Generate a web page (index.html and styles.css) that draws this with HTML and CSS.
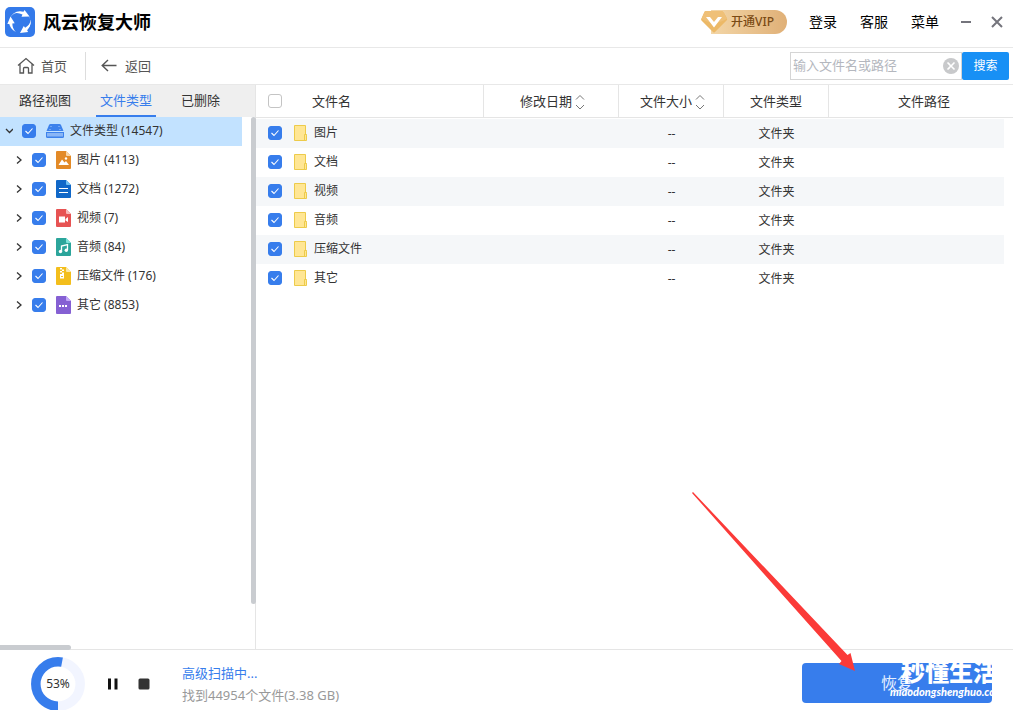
FILE: index.html
```html
<!DOCTYPE html>
<html lang="zh-CN">
<head>
<meta charset="utf-8">
<title>风云恢复大师</title>
<link rel="stylesheet" href="styles.css">
</head>
<body>
<div class="app">
  <header class="titlebar">
    <svg class="logo" viewBox="0 0 30 30" width="30" height="30" aria-hidden="true">
      <rect width="30" height="30" rx="5" fill="#347aea"/>
      <g fill="#fff">
        <path d="M8.500 6.500Q13 3.200 18.500 4.800L19.500 3L24.500 9.500L16.500 9.800L17.500 7.600Q13 5 8.500 6.500Z"/>
        <path d="M8.500 6.500Q13 3.200 18.500 4.800L19.500 3L24.500 9.500L16.500 9.800L17.500 7.600Q13 5 8.500 6.500Z" transform="rotate(120 15 15)"/>
        <path d="M8.500 6.500Q13 3.200 18.500 4.800L19.500 3L24.500 9.500L16.500 9.800L17.500 7.600Q13 5 8.500 6.500Z" transform="rotate(240 15 15)"/>
        <path d="M5.300 19.500A10.700 10.700 0 0 1 8.500 6.500L11 6A9.600 9.600 0 0 0 5.300 19.500Z"/>
        <path d="M23.500 8.500A10.700 10.700 0 0 1 24.500 19.500L22.800 21A10 10 0 0 0 23.500 8.500Z"/>
      </g>
    </svg>
    <h1 class="title">风云恢复大师</h1>
    <button class="vip" type="button">
      <svg class="gem" viewBox="0 0 27 24" width="27" height="24" aria-hidden="true">
        <path d="M5 1H20Q22 1 23 3L26 8.500Q26.500 9.500 25.500 10.500L14 22Q13 23 12 22L.5 10.500Q-.3 9.500 .5 8.500L3 3Q3.500 1 5 1Z" fill="#ecb967"/>
        <path d="M5 1H20Q22 1 23 3L26 8.500Q26.500 9.500 13 14Q-.3 9.500 .5 8.500L3 3Q3.500 1 5 1Z" fill="#efc078"/>
        <path d="M5 7H9L13 12L17 7H21L13 17.500Z" fill="#fff"/>
      </svg>
      <span>开通VIP</span>
    </button>
    <nav class="menu">
      <a href="#">登录</a>
      <a href="#">客服</a>
      <a href="#">菜单</a>
    </nav>
    <button class="win" type="button" aria-label="最小化">
      <svg viewBox="0 0 12 12" width="12" height="12"><path d="M1 6H11" stroke="#74747c" stroke-width="2"/></svg>
    </button>
    <button class="win" type="button" aria-label="关闭">
      <svg viewBox="0 0 12 12" width="12" height="12"><path d="M1 1L11 11M11 1L1 11" stroke="#74747c" stroke-width="2"/></svg>
    </button>
  </header>

  <div class="toolbar">
    <button class="tool home" type="button">
      <svg viewBox="0 0 18 18" width="18" height="18" fill="none" stroke="#555" stroke-width="1.300"><path d="M1 8.500L9 1.500L17 8.500M3 7V16H6.500V11.500Q6.500 10.500 7.500 10.500H10.500Q11.500 10.500 11.500 11.500V16H15V7"/></svg>
      <span>首页</span>
    </button>
    <button class="tool back" type="button">
      <svg viewBox="0 0 16 14" width="16" height="14" fill="none" stroke="#555" stroke-width="1.400"><path d="M1 6.500H15.500M7 1L1.200 6.500L7 12"/></svg>
      <span>返回</span>
    </button>
    <form class="search">
      <input class="query" type="text" placeholder="输入文件名或路径" aria-label="输入文件名或路径">
      <button class="clear" type="button" aria-label="清除">
        <svg viewBox="0 0 16 16" width="16" height="16"><circle cx="8" cy="8" r="8" fill="#c8c9cb"/><path d="M4.500 4.500L11.500 11.500M11.500 4.500L4.500 11.500" stroke="#fff" stroke-width="1.600"/></svg>
      </button>
      <button class="go" type="button">搜索</button>
    </form>
  </div>

  <main class="main">
    <aside class="side">
      <div class="tabs" role="tablist">
        <button class="tab" type="button" role="tab">路径视图</button>
        <button class="tab active" type="button" role="tab" aria-selected="true">文件类型</button>
        <button class="tab" type="button" role="tab">已删除</button>
      </div>
      <div class="treewrap">
        <ul class="tree">
          <li class="node root">
            <svg class="caret" viewBox="0 0 8 8" width="8" height="8"><path d="M1 2L4.500 5.500L8 2"/></svg>
            <label><input class="check" type="checkbox" checked>
              <svg class="drive" viewBox="0 0 18 14" width="18" height="14"><path d="M4.500 0H13.500Q14.500 0 15 1L17.500 7H.5L3 1Q3.500 0 4.500 0Z" fill="#3d82ec"/><path d="M0 8H18V12.500Q18 14 16.500 14H1.500Q0 14 0 12.500Z" fill="#3d82ec"/><path d="M2 9V12.500M4 9V12.500M6 9V12.500M8 9V12.500M10 9V12.500M12 9V12.500M14 9V12.500M16 9V12.500" stroke="#d6e9ff"/><path d="M4.500 2.500H5.500M12.500 2.500H13.500M3.500 5.500H4.500M13.500 5.500H14.500" stroke="#a9cbfa"/></svg>
              文件类型 (14547)</label>
          </li>
          <li class="node">
            <svg class="caret" viewBox="0 0 8 8" width="8" height="8"><path d="M2 0.500L6 4L2 7.500"/></svg>
            <label><input class="check" type="checkbox" checked>
              <svg class="file" viewBox="0 0 15 18" width="15" height="18"><path d="M1 0H10L15 5V17Q15 18 14 18H1Q0 18 0 17V1Q0 0 1 0Z" fill="#e38a27"/><path d="M10 0L15 5H11Q10 5 10 4Z" fill="#f8d6a8"/><path d="M2.500 14L6 8.500L8.500 11.500L10 10L13 14Z" fill="#fff"/><circle cx="10" cy="7.500" r="1.200" fill="#fff"/></svg>
              图片 (4113)</label>
          </li>
          <li class="node">
            <svg class="caret" viewBox="0 0 8 8" width="8" height="8"><path d="M2 0.500L6 4L2 7.500"/></svg>
            <label><input class="check" type="checkbox" checked>
              <svg class="file" viewBox="0 0 15 18" width="15" height="18"><path d="M1 0H10L15 5V17Q15 18 14 18H1Q0 18 0 17V1Q0 0 1 0Z" fill="#1168c8"/><path d="M10 0L15 5H11Q10 5 10 4Z" fill="#6fc0f2"/><path d="M3 8.500H12M3 12.500H12" stroke="#fff" stroke-width="1.200"/></svg>
              文档 (1272)</label>
          </li>
          <li class="node">
            <svg class="caret" viewBox="0 0 8 8" width="8" height="8"><path d="M2 0.500L6 4L2 7.500"/></svg>
            <label><input class="check" type="checkbox" checked>
              <svg class="file" viewBox="0 0 15 18" width="15" height="18"><path d="M1 0H10L15 5V17Q15 18 14 18H1Q0 18 0 17V1Q0 0 1 0Z" fill="#e75353"/><path d="M10 0L15 5H11Q10 5 10 4Z" fill="#f8b9b9"/><path d="M3 7.500H9V13.500H3ZM9.500 10L12 8V13L9.500 11.500Z" fill="#fff"/></svg>
              视频 (7)</label>
          </li>
          <li class="node">
            <svg class="caret" viewBox="0 0 8 8" width="8" height="8"><path d="M2 0.500L6 4L2 7.500"/></svg>
            <label><input class="check" type="checkbox" checked>
              <svg class="file" viewBox="0 0 15 18" width="15" height="18"><path d="M1 0H10L15 5V17Q15 18 14 18H1Q0 18 0 17V1Q0 0 1 0Z" fill="#2ca59b"/><path d="M10 0L15 5H11Q10 5 10 4Z" fill="#7be3da"/><path d="M5.500 13.500V8L11.500 6.500V12" fill="none" stroke="#fff" stroke-width="1.300"/><circle cx="4.500" cy="13.500" r="1.700" fill="#fff"/><circle cx="10.300" cy="12.200" r="1.700" fill="#fff"/></svg>
              音频 (84)</label>
          </li>
          <li class="node">
            <svg class="caret" viewBox="0 0 8 8" width="8" height="8"><path d="M2 0.500L6 4L2 7.500"/></svg>
            <label><input class="check" type="checkbox" checked>
              <svg class="file" viewBox="0 0 15 18" width="15" height="18"><path d="M1 0H10L15 5V17Q15 18 14 18H1Q0 18 0 17V1Q0 0 1 0Z" fill="#f3be1c"/><path d="M10 0L15 5H11Q10 5 10 4Z" fill="#fbe7a4"/><path d="M4 1H6V2.500H4ZM6 2.500H8V4H6ZM4 4H6V5.500H4ZM6 5.500H8V7H6ZM4 7H8V11.500H4Z" fill="#fff"/><path d="M5 9.500H7" stroke="#f3be1c"/></svg>
              压缩文件 (176)</label>
          </li>
          <li class="node">
            <svg class="caret" viewBox="0 0 8 8" width="8" height="8"><path d="M2 0.500L6 4L2 7.500"/></svg>
            <label><input class="check" type="checkbox" checked>
              <svg class="file" viewBox="0 0 15 18" width="15" height="18"><path d="M1 0H10L15 5V17Q15 18 14 18H1Q0 18 0 17V1Q0 0 1 0Z" fill="#8560d3"/><path d="M10 0L15 5H11Q10 5 10 4Z" fill="#c3a8fa"/><path d="M3 9H5V11H3ZM6 9H8V11H6ZM9 9H11V11H9Z" fill="#fff"/></svg>
              其它 (8853)</label>
          </li>
        </ul>
        <div class="vbar"></div>
        <div class="hbar"></div>
      </div>
    </aside>

    <section class="list">
      <table class="files">
        <colgroup><col class="c-name"><col class="c-date"><col class="c-size"><col class="c-type"><col><col class="c-gutter"></colgroup>
        <thead>
          <tr>
            <th class="name"><label class="cell"><input class="check" type="checkbox">文件名</label></th>
            <th class="sortable">修改日期<svg class="sort" viewBox="0 0 10 16" width="10" height="16"><path d="M1 4.500L5 .5L9 4.500M1 10L5 14L9 10"/></svg></th>
            <th class="sortable">文件大小<svg class="sort" viewBox="0 0 10 16" width="10" height="16"><path d="M1 4.500L5 .5L9 4.500M1 10L5 14L9 10"/></svg></th>
            <th>文件类型</th>
            <th class="path" colspan="2">文件路径</th>
          </tr>
        </thead>
        <tbody>
          <tr><td class="name"><label class="cell"><input class="check" type="checkbox" checked><svg class="folder" viewBox="0 0 13 16" width="13" height="16"><path d="M.5.5H11.500V9.500H12.500V15.500H.5Z"/><path d="M10.500 15.500V9.500H12.500"/></svg>图片</label></td><td></td><td>--</td><td>文件夹</td><td></td><td class="gutter"></td></tr>
          <tr><td class="name"><label class="cell"><input class="check" type="checkbox" checked><svg class="folder" viewBox="0 0 13 16" width="13" height="16"><path d="M.5.5H11.500V9.500H12.500V15.500H.5Z"/><path d="M10.500 15.500V9.500H12.500"/></svg>文档</label></td><td></td><td>--</td><td>文件夹</td><td></td><td class="gutter"></td></tr>
          <tr><td class="name"><label class="cell"><input class="check" type="checkbox" checked><svg class="folder" viewBox="0 0 13 16" width="13" height="16"><path d="M.5.5H11.500V9.500H12.500V15.500H.5Z"/><path d="M10.500 15.500V9.500H12.500"/></svg>视频</label></td><td></td><td>--</td><td>文件夹</td><td></td><td class="gutter"></td></tr>
          <tr><td class="name"><label class="cell"><input class="check" type="checkbox" checked><svg class="folder" viewBox="0 0 13 16" width="13" height="16"><path d="M.5.5H11.500V9.500H12.500V15.500H.5Z"/><path d="M10.500 15.500V9.500H12.500"/></svg>音频</label></td><td></td><td>--</td><td>文件夹</td><td></td><td class="gutter"></td></tr>
          <tr><td class="name"><label class="cell"><input class="check" type="checkbox" checked><svg class="folder" viewBox="0 0 13 16" width="13" height="16"><path d="M.5.5H11.500V9.500H12.500V15.500H.5Z"/><path d="M10.500 15.500V9.500H12.500"/></svg>压缩文件</label></td><td></td><td>--</td><td>文件夹</td><td></td><td class="gutter"></td></tr>
          <tr><td class="name"><label class="cell"><input class="check" type="checkbox" checked><svg class="folder" viewBox="0 0 13 16" width="13" height="16"><path d="M.5.5H11.500V9.500H12.500V15.500H.5Z"/><path d="M10.500 15.500V9.500H12.500"/></svg>其它</label></td><td></td><td>--</td><td>文件夹</td><td></td><td class="gutter"></td></tr>
        </tbody>
      </table>
    </section>
  </main>

  <footer class="status">
    <div class="ring">
      <svg viewBox="0 0 54 54" width="54" height="54" fill="none" stroke-width="9.500">
        <circle cx="27" cy="27" r="22.200" stroke="#f2f5ff"/>
        <circle cx="27" cy="27" r="22.200" stroke="#377dec" pathLength="100" stroke-dasharray="53 47" transform="rotate(90 27 27)"/>
      </svg>
      <span class="percent">53%</span>
    </div>
    <button class="ctl pause" type="button" aria-label="暂停"><svg viewBox="0 0 12 12" width="12" height="12"><path d="M1 .5H4V11.500H1ZM7.500 .5H10.500V11.500H7.500Z" fill="#111"/></svg></button>
    <button class="ctl stop" type="button" aria-label="停止"><svg viewBox="0 0 12 12" width="12" height="12"><rect x=".5" y=".5" width="11" height="11" rx="1.500" fill="#333"/></svg></button>
    <div class="info">
      <p class="scan">高级扫描中...</p>
      <p class="found">找到44954个文件(3.38 GB)</p>
    </div>
    <div class="action">
      <button class="recover" type="button">恢复</button>
      <div class="mark"><span class="mark-name">秒懂生活</span><span class="mark-url">miaodongshenghuo.com</span></div>
      <svg class="arrow" viewBox="0 0 164 179" width="164" height="179" aria-hidden="true"><path d="M0 1L1 0L155.500 163L158.500 161L163 179L147 172L149.500 169Z" fill="#fb3a38"/></svg>
    </div>
  </footer>
</div>
</body>
</html>
```

FILE: styles.css
```css
* { box-sizing: border-box; }

body {
  margin: 0;
  font: 12px/20px "Noto Sans", "Noto Sans CJK SC", sans-serif;
  color: #333;
  background: #fff;
}

h1, p, ul { margin: 0; padding: 0; }
svg { flex: none; }

button {
  padding: 0;
  border: 0;
  background: none;
  font: inherit;
  color: inherit;
}

.app {
  display: flex;
  flex-direction: column;
  min-height: 100vh;
}

/* Title bar */
.titlebar {
  display: flex;
  align-items: center;
  height: 48px;
  padding: 0 10px 4px 5px;
  border-bottom: 1px solid #e8e8e8;
}
.title {
  margin-left: 8px;
  font-size: 18px;
  line-height: 24px;
  font-weight: 700;
  color: #000;
}
.vip {
  display: flex;
  align-items: center;
  gap: 3px;
  height: 24px;
  margin-left: auto;
  padding-right: 13px;
  border-radius: 4px 12px 12px 4px;
  background: linear-gradient(90deg, #f3d6a7, #e0b077) no-repeat right / 76px 24px;
  font-weight: 500;
  color: #7a4a14;
}
.menu {
  display: flex;
  gap: 23px;
  margin: 0 21px 0 22px;
  font-size: 14px;
}
.menu a { color: #000; text-decoration: none; }
.win {
  display: flex;
  align-items: center;
  height: 20px;
}
.win + .win { margin-left: 19px; }

/* Toolbar */
.toolbar {
  display: flex;
  align-items: center;
  height: 37px;
  padding: 0 4px 0 17px;
  border-bottom: 1px solid #e8e8e8;
  font-size: 13px;
  color: #555;
}
.tool {
  display: flex;
  align-items: center;
  gap: 6px;
  height: 28px;
}
.home { padding-right: 18px; border-right: 1px solid #ddd; }
.back { padding-left: 15px; gap: 8px; }
.search {
  display: flex;
  align-items: center;
  margin-left: auto;
  position: relative;
}
.query {
  width: 172px;
  height: 28px;
  padding: 0 22px 2px 2px;
  border: 1px solid #d5d5d5;
  outline: 0;
  font: inherit;
  color: #333;
}
.query::placeholder { color: #b4b7be; opacity: 1; }
.clear {
  position: absolute;
  right: 50px;
  top: 6px;
  height: 16px;
}
.clear svg { display: block; }
.go {
  width: 47px;
  height: 28px;
  border-radius: 2px;
  background: #1890f5;
  font-size: 12px;
  color: #fff;
}

/* Side tree */
.main { display: flex; flex: 1; }
.side {
  display: flex;
  flex-direction: column;
  width: 256px;
  border-right: 1px solid #e5e5e5;
}
.tabs {
  display: flex;
  gap: 21px;
  height: 32px;
  padding-left: 15px;
  background: #efefef;
  font-size: 13px;
}
.tab {
  padding: 0 4px;
  border-bottom: 2px solid transparent;
}
.tab.active { color: #377dec; border-color: #377dec; }
.treewrap {
  position: relative;
  flex: 1;
}
.tree { list-style: none; margin-right: 13px; }
.node {
  display: flex;
  align-items: center;
  gap: 9px;
  height: 29px;
  padding: 0 0 1px 15px;
}
.root { padding-left: 5px; background: #c2e2ff; }
.node label { display: flex; align-items: center; }
.caret { fill: none; stroke: #333; stroke-width: 1.3; }
.file,
.drive { margin: 0 6px 0 10px; }
.vbar {
  position: absolute;
  top: 0;
  right: -1px;
  bottom: 45px;
  width: 5px;
  border-radius: 3px;
  background: #c9ccd0;
}
.hbar {
  position: absolute;
  left: 0;
  bottom: -1px;
  width: 71px;
  height: 5px;
  border-radius: 0 3px 3px 0;
  background: #c9ccd0;
}

.check {
  appearance: none;
  flex: none;
  width: 14px;
  height: 14px;
  margin: 0;
  border: 1px solid #c4c4c4;
  border-radius: 3px;
  background: #fff;
}
.check:checked {
  border-color: #377dec;
  background: #377dec url("data:image/svg+xml,%3Csvg xmlns='http://www.w3.org/2000/svg' viewBox='0 0 12 12'%3E%3Cpath d='M2.500 6L5 8.500L9.500 3.500' fill='none' stroke='%23fff' stroke-width='1.100'/%3E%3C/svg%3E");
}

/* File list */
.list { flex: 1; min-width: 0; }
.files {
  width: 100%;
  table-layout: fixed;
  border-spacing: 0;
}
.c-name { width: 228px; }
.c-date { width: 135px; }
.c-size, .c-type { width: 105px; }
.c-gutter { width: 9px; }
.files th {
  height: 33px;
  padding: 0;
  border-right: 1px solid #e5e5e5;
  border-bottom: 1px solid #e5e5e5;
  font-size: 13px;
  font-weight: 400;
}
.files th.sortable { padding-left: 3px; }
.files th.path { padding-left: 6px; border-right: 0; }
.files td {
  height: 29px;
  padding: 0;
  text-align: center;
}
.files td.name { vertical-align: top; }
.files tbody tr:nth-child(odd) td:not(.gutter) { background: #f5f7f9; }
.files tbody tr:first-child td {
  height: 30px;
  border-top: 1px solid #fff;
}
.cell {
  display: flex;
  align-items: center;
  height: 28px;
  padding-left: 12px;
}
th .cell { gap: 30px; }
.sort {
  margin-left: 3px;
  vertical-align: middle;
  fill: none;
  stroke: #777;
}
.folder {
  margin: 0 7px 0 12px;
  fill: #ffe694;
  stroke: #edcb4a;
}

/* Status bar */
.status {
  display: flex;
  align-items: center;
  height: 61px;
  padding: 8px 21px 0 31px;
  border-top: 1px solid #e5e5e5;
}
.ring {
  display: grid;
  grid-template-rows: 54px;
  place-items: center;
  align-self: flex-end;
  height: 53px;
  overflow: hidden;
}
.ring svg, .percent { grid-area: 1 / 1; }
.ctl svg { display: block; }
.pause { margin-left: 22px; }
.stop { margin-left: 19px; }
.info {
  margin-left: 32px;
  font-size: 13px;
  line-height: 22px;
}
.scan { color: #377dec; }
.found { color: #999; }
.action {
  position: relative;
  width: 190px;
  margin: 0 0 2px auto;
}
.recover {
  display: block;
  width: 100%;
  height: 40px;
  border-radius: 4px;
  background: #377dec;
  font-size: 16px;
  color: #e6efff;
}
.mark {
  position: absolute;
  top: -4px;
  left: 88px;
  color: #fff;
  white-space: nowrap;
}
.mark-name {
  display: block;
  margin-left: 11px;
  font-size: 24px;
  line-height: 26px;
  font-weight: 900;
}
.mark-url {
  display: block;
  font: italic 900 11px/14px Lato, sans-serif;
}
.arrow {
  position: absolute;
  right: 136px;
  bottom: 32px;
  pointer-events: none;
}
```
